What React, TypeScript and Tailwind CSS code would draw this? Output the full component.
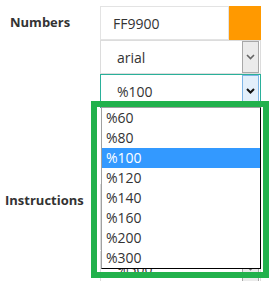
import React from 'react';

const Chevron = ({ dark }: { dark?: boolean }) => (
  <svg width="9" height="6" viewBox="0 0 9 6" className="block">
    <path d="M1 1l3.5 3.5L8 1" fill="none" stroke={dark ? '#111' : '#666'} strokeWidth={dark ? 2 : 1.6} />
  </svg>
);

const Select = ({ value, focused }: { value: string; focused?: boolean }) => (
  <div
    className={`flex h-[34px] w-[161px] items-center border bg-white pl-4 ${
      focused ? 'border-[#2ab09a]' : 'border-[#dcdcdc]'
    }`}
  >
    <span className="flex-1 text-[14px] text-[#333]">{value}</span>
    <div
      className={`mr-px flex h-[32px] w-[17px] items-center justify-center border ${
        focused ? 'border-[#7db4e6] bg-[#e3effb]' : 'border-[#a8a8a8] bg-[#ebebeb]'
      }`}
    >
      <Chevron dark={focused} />
    </div>
  </div>
);

const options = ['%60', '%80', '%100', '%120', '%140', '%160', '%200', '%300'];

export default function App() {
  return (
    <div className="relative h-[281px] w-[277px] overflow-hidden bg-white font-['Open_Sans',sans-serif] text-[#333]">
      <div className="flex flex-col pt-[6px]">
        <div className="flex">
          <div className="w-[100px] pl-[10px] pt-[7px] text-[13px] font-bold text-[#333]">Numbers</div>
          <div className="flex flex-col">
            <div className="flex h-[34px] w-[161px]">
              <div className="flex flex-1 items-center border border-[#e3e3e3] pl-3 text-[14px]">FF9900</div>
              <div className="w-[32px] bg-[#ff9900]" />
            </div>
            <Select value="arial" />
            <Select value="%100" focused />
          </div>
        </div>

        <div className="mt-[76px] flex">
          <div className="w-[100px] pl-[5px] pt-[7px] text-[13px] font-bold text-[#333]">Instructions</div>
          <div className="flex flex-col gap-[1px]">
            <div className="h-[66px] w-[161px] border border-[#dcdcdc] bg-white" />
            <Select value="%300" />
          </div>
        </div>
      </div>

      {/* open dropdown list */}
      <div className="absolute left-[101px] top-[107px] w-[160px] border border-b-black border-l-[#a0a0a0] border-r-black border-t-[#a0a0a0] bg-white">
        {options.map((o) => (
          <div
            key={o}
            className={`h-[20px] pl-[4px] text-[14px] leading-[20px] ${
              o === '%100' ? 'bg-[#3399ff] text-white' : 'text-[#333]'
            }`}
          >
            {o}
          </div>
        ))}
      </div>

      {/* highlight frame */}
      <div className="absolute left-[91px] top-[101px] h-[177px] w-[178px] border-[6px] border-[#22b14c]" />
    </div>
  );
}
